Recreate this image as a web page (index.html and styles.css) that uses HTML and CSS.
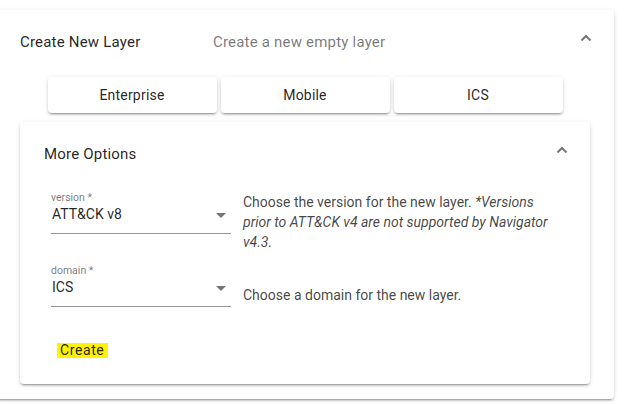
FILE: index.html
```html
<!DOCTYPE html>
<html>
<head>
<meta charset="utf-8">
<link rel="stylesheet" href="styles.css">
</head>
<body>
<div class="panel outer">
  <div class="panel-header">
    <div class="panel-title">Create New Layer</div>
    <div class="panel-desc">Create a new empty layer</div>
    <svg class="chevron" width="12" height="8" viewBox="0 0 12 8"><polyline points="1.5,6.5 6,2 10.5,6.5" fill="none" stroke="rgba(0,0,0,0.54)" stroke-width="2"/></svg>
  </div>
  <div class="outer-body">
    <div class="domain-buttons">
      <div class="raised-btn">Enterprise</div>
      <div class="raised-btn">Mobile</div>
      <div class="raised-btn">ICS</div>
    </div>
    <div class="panel inner">
      <div class="panel-header">
        <div class="panel-title">More Options</div>
        <svg class="chevron" width="12" height="8" viewBox="0 0 12 8"><polyline points="1.5,6.5 6,2 10.5,6.5" fill="none" stroke="rgba(0,0,0,0.54)" stroke-width="2"/></svg>
      </div>
      <div class="inner-body">
        <div class="option-row">
          <div class="field">
            <div class="field-box">
              <div class="field-label">version *</div>
              <div class="field-select"><span>ATT&amp;CK v8</span><span class="arrow"></span></div>
            </div>
          </div>
          <div class="option-desc">Choose the version for the new layer. <i>*Versions prior to ATT&amp;CK v4 are not supported by Navigator v4.3.</i></div>
        </div>
        <div class="option-row">
          <div class="field">
            <div class="field-box">
              <div class="field-label">domain *</div>
              <div class="field-select"><span>ICS</span><span class="arrow"></span></div>
            </div>
          </div>
          <div class="option-desc">Choose a domain for the new layer.</div>
        </div>
        <div class="create-btn"><span class="highlight">Create</span></div>
      </div>
    </div>
  </div>
</div>
</body>
</html>
```
FILE: styles.css
```css
* { box-sizing: border-box; }
html, body { margin: 0; padding: 0; background: #fff; }
body {
  font-family: Roboto, "Liberation Sans", sans-serif;
  color: rgba(0,0,0,0.87);
  width: 628px;
  height: 404px;
  overflow: hidden;
}
.panel {
  background: #fff;
  border-radius: 4px;
  box-shadow: 0 3px 1px -2px rgba(0,0,0,0.2), 0 2px 2px 0 rgba(0,0,0,0.14), 0 1px 5px 0 rgba(0,0,0,0.12);
}
.outer {
  margin: 10px 0 0 -4px;
  width: 618px;
}
.panel-header {
  height: 64px;
  padding: 0 24px;
  display: flex;
  align-items: center;
  font-size: 15px;
  letter-spacing: 0.2px;
}
.outer > .panel-header .panel-title { width: 193px; }
.panel-title { color: rgba(0,0,0,0.87); }
.panel-desc { flex: 1; color: rgba(0,0,0,0.54); }
.inner .panel-title { flex: 1; }
.chevron {
  display: block;
  margin: -8px -2px 0 0;
}
.outer-body {
  padding: 3px 24px 15px;
}
.domain-buttons {
  display: flex;
  justify-content: center;
  gap: 4px;
}
.raised-btn {
  width: 169px;
  height: 36px;
  line-height: 36px;
  text-align: center;
  font-size: 14px;
  letter-spacing: 0.2px;
  color: rgba(0,0,0,0.87);
  background: #fff;
  border-radius: 4px;
  box-shadow: 0 3px 1px -2px rgba(0,0,0,0.2), 0 2px 2px 0 rgba(0,0,0,0.14), 0 1px 5px 0 rgba(0,0,0,0.12);
}
.inner {
  margin-top: 9px;
}
.inner-body {
  padding: 6px 24px 16px;
}
.option-row {
  display: flex;
  align-items: center;
  padding-left: 7px;
}
.option-row + .option-row {
  margin-top: 13px;
}
.field {
  width: 180px;
  height: 60px;
  flex-shrink: 0;
  margin-right: 12px;
}
.field-box {
  border-bottom: 1px solid rgba(0,0,0,0.42);
  padding-bottom: 11px;
}
.field-label {
  height: 14px;
  font-size: 10.5px;
  line-height: 12px;
  color: rgba(0,0,0,0.54);
}
.field-select {
  display: flex;
  align-items: center;
  justify-content: space-between;
  height: 16px;
  font-size: 14px;
  line-height: 16px;
  padding-left: 1px;
}
.arrow {
  width: 0;
  height: 0;
  border-left: 5px solid transparent;
  border-right: 5px solid transparent;
  border-top: 5px solid rgba(0,0,0,0.54);
  margin: 3px 5px 0 0;
}
.option-desc {
  width: 316px;
  font-size: 14px;
  line-height: 20px;
  color: rgba(0,0,0,0.74);
}
.create-btn {
  margin-top: 7px;
  height: 36px;
  display: flex;
  align-items: center;
  padding-left: 13px;
  font-size: 14px;
}
.highlight {
  background: #fff200;
  padding: 0 4px 0 3px;
  line-height: 15px;
  letter-spacing: 0.6px;
  color: rgba(0,0,0,0.87);
}
```
